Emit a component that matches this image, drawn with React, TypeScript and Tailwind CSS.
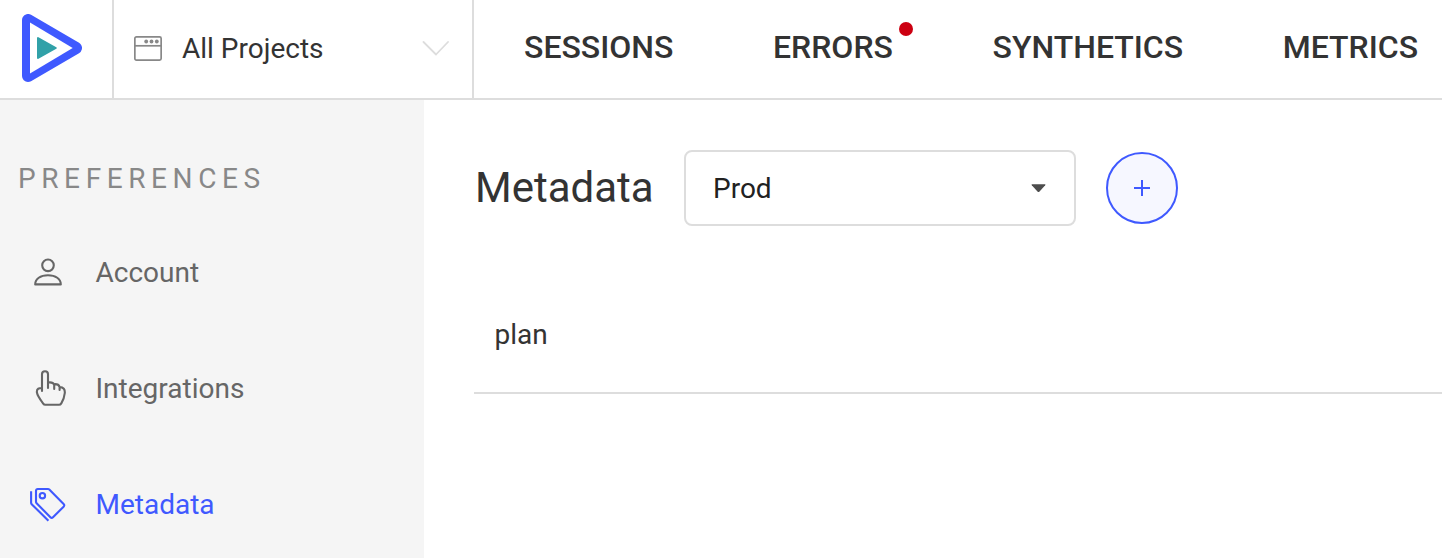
import React from "react";

const Logo = () => (
  <svg width="60" height="68" viewBox="22 14 60 68">
    <path d="M28 20V76L76 48Z" fill="#3f59ff" stroke="#3f59ff" strokeWidth="12" strokeLinejoin="round" />
    <path d="M30 22.5V73.5L72.7 48Z" fill="#fff" />
    <path d="M38 38V58L55.8 48Z" fill="#31a1a8" stroke="#31a1a8" strokeWidth="2" strokeLinejoin="round" />
  </svg>
);

const WindowIcon = () => (
  <svg width="28" height="25" viewBox="0 0 28 25" fill="none" stroke="#888" strokeWidth="1.7">
    <rect x="0.85" y="0.85" width="26.3" height="23.3" rx="1.6" />
    <path d="M1 9.8H27" />
    <g fill="#888" stroke="none">
      <circle cx="12.2" cy="5.5" r="1.9" />
      <circle cx="17.5" cy="5.5" r="1.9" />
      <circle cx="22.8" cy="5.5" r="1.9" />
    </g>
  </svg>
);

const AccountIcon = () => (
  <svg width="36" height="36" viewBox="0 0 36 36" fill="none" stroke="#666" strokeWidth="2.1" strokeLinejoin="round">
    <circle cx="18" cy="11.3" r="5.8" />
    <path d="M5.2 30.4H30.8C30.8 24.8 25.6 21.3 18 21.3S5.2 24.8 5.2 30.4Z" />
  </svg>
);

const PointerIcon = () => (
  <svg width="36" height="36" viewBox="0 0 36 36" fill="none" stroke="#666" strokeWidth="2.1" strokeLinecap="round" strokeLinejoin="round">
    <path d="M12 21V4.3a3 3 0 0 1 6 0V18M18 12.5q5-.8 6.2 2.2V19M24.2 14.2q4.4-.4 5.4 2.7V20M29.6 17.1c4 .1 5.5 2.4 5.2 5.9-.4 4-1.7 7.4-3.5 10.4q-.8 1.4-2.3 1.4H15.2q-1.2 0-2-1.2C10.5 30 7.2 24.8 6.9 22.4 6.5 18.4 9.1 18.2 12 18" />
  </svg>
);

const TagsIcon = () => (
  <svg width="36" height="36" viewBox="0 0 36 36" fill="none" stroke="#3f59ff" strokeWidth="2.1" strokeLinejoin="round">
    <path d="M6 4.8Q6 3 7.8 3H18Q18.7 3 19.3 3.6L33.6 17.9Q35 19.3 33.6 20.7L23 31.3Q21.7 32.6 20.4 31.3L6.6 17.2Q6 16.6 6 15.8Z" />
    <circle cx="12.4" cy="9.7" r="2.7" />
    <path d="M1.1 5.3V16.8Q1.1 17.6 1.7 18.2L18.4 34.8" />
  </svg>
);

const navItems = [
  { label: "SESSIONS", alert: false },
  { label: "ERRORS", alert: true },
  { label: "SYNTHETICS", alert: false },
  { label: "METRICS", alert: false },
];

const menuItems = [
  { label: "Account", Icon: AccountIcon, active: false },
  { label: "Integrations", Icon: PointerIcon, active: false },
  { label: "Metadata", Icon: TagsIcon, active: true },
];

export default function App() {
  return (
    <div className="flex h-[558px] w-full flex-col overflow-hidden bg-white font-['Roboto',sans-serif] text-[28px] leading-8 text-[#333] antialiased">
      <header className="flex h-[100px] shrink-0 border-b-2 border-[#ddd]">
        <div className="flex w-[114px] shrink-0 border-r-2 border-[#ddd] pt-3.5 pl-[22px]">
          <Logo />
        </div>
        <div className="flex w-[360px] shrink-0 items-center border-r-2 border-[#ddd] pr-[23px] pb-0.5 pl-5">
          <WindowIcon />
          <span className="ml-5 flex-1 pt-0.5">All Projects</span>
          <svg width="28" height="16" viewBox="0 0 28 16" fill="none" stroke="#ddd" strokeWidth="1.8" strokeLinecap="round" strokeLinejoin="round">
            <path d="M2.5 2L15 14.5L27 2" />
          </svg>
        </div>
        <nav className="flex items-center gap-[99.6px] pb-1 pl-[50px] text-[32px] leading-10 font-medium">
          {navItems.map((n) => (
            <a key={n.label} className="relative">
              {n.label}
              {n.alert && <span className="absolute -top-[5px] -right-5 size-3.5 rounded-full bg-[#cc0011]" />}
            </a>
          ))}
        </nav>
      </header>
      <div className="flex flex-1">
        <aside className="w-[424px] shrink-0 bg-[#f5f5f5] pt-[63px]">
          <h2 className="pl-[18px] tracking-[5.6px] text-[#888]">PREFERENCES</h2>
          <ul className="flex flex-col gap-12 pt-[43px] pl-[30px]">
            {menuItems.map(({ label, Icon, active }) => (
              <li key={label} className={active ? "flex h-[68px] items-center gap-[29.5px] text-[#3f59ff]" : "flex h-[68px] items-center gap-[29.5px] text-[#666]"}>
                <Icon />
                <span className="pt-0.5">{label}</span>
              </li>
            ))}
          </ul>
        </aside>
        <main className="min-w-0 flex-1 pt-[50px] pl-[50px]">
          <div className="flex items-center">
            <h1 className="w-[210px] pl-px text-[42px] leading-[48px]">Metadata</h1>
            <div className="flex h-[76px] w-[392px] items-center justify-between rounded-lg border-2 border-[#ddd] pr-7 pl-[27px] text-[#212121]">
              <span className="pt-0.5">Prod</span>
              <svg width="15" height="9" viewBox="0 0 15 9">
                <path d="M1.2 0.3H13.8Q15 0.3 14.2 1.3L8.3 7.7Q7.5 8.5 6.7 7.7L0.8 1.3Q0 0.3 1.2 0.3Z" fill="#4d4d4d" />
              </svg>
            </div>
            <button className="ml-[30px] flex size-[72px] items-center justify-center rounded-full border-2 border-[#3f59ff] bg-[#f6f7ff]">
              <svg width="16" height="16" viewBox="0 0 16 16" stroke="#3f59ff" strokeWidth="2">
                <path d="M8 0V16M0 8H16" />
              </svg>
            </button>
          </div>
          <div className="mt-[50px] flex h-[118px] items-center border-b-2 border-[#ddd] pt-0.5 pl-[20.5px]">plan</div>
        </main>
      </div>
    </div>
  );
}
